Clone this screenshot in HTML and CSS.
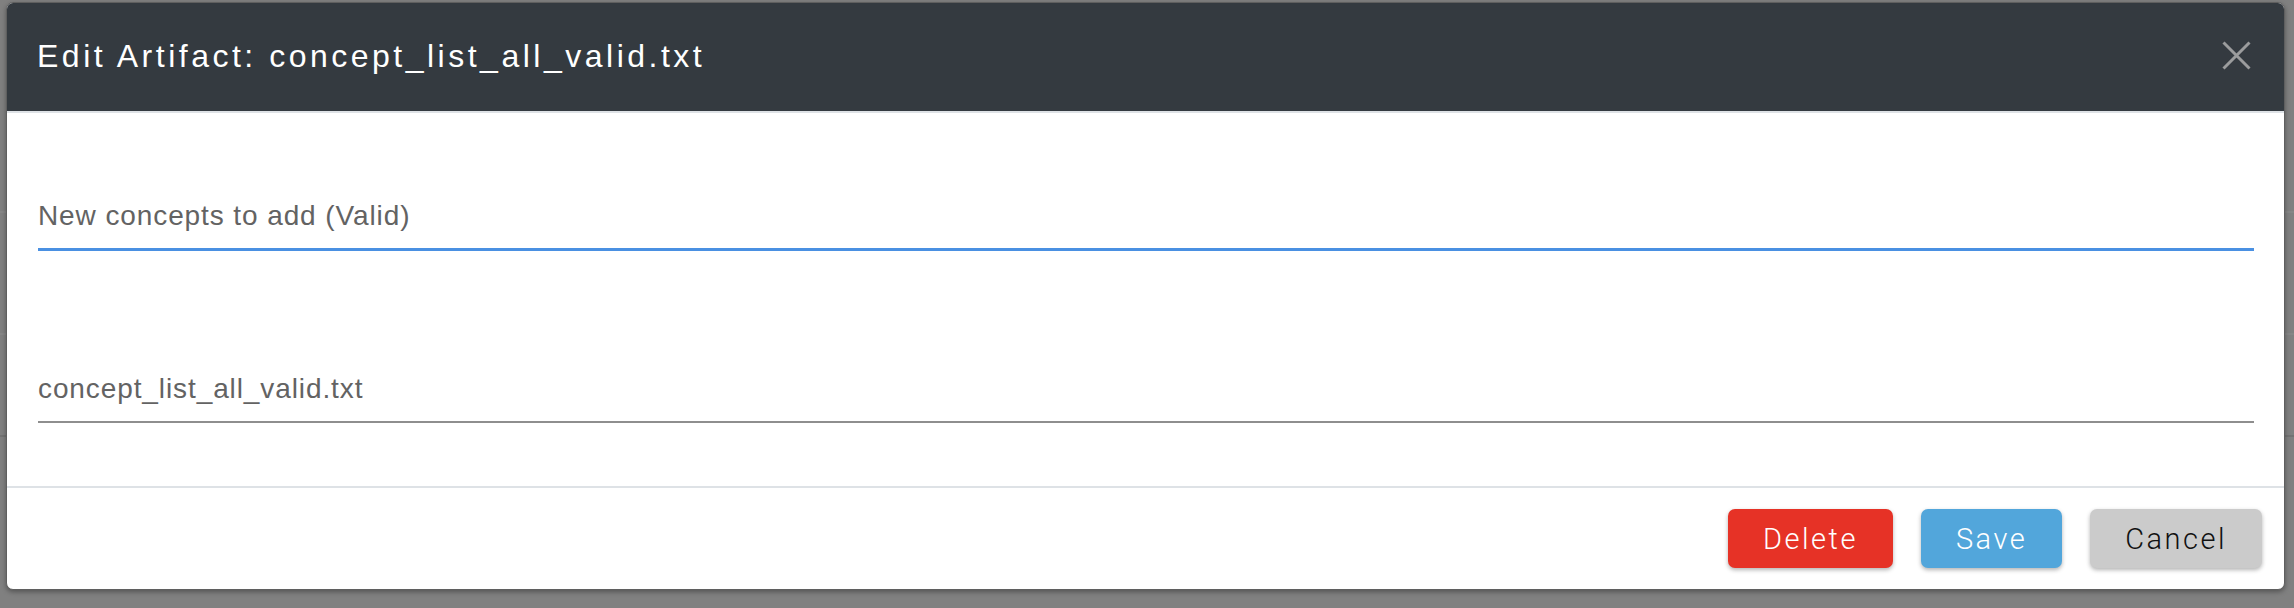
FILE: index.html
```html
<!DOCTYPE html>
<html lang="en">
<head>
<meta charset="utf-8">
<title>Edit Artifact</title>
<link rel="stylesheet" href="styles.css">
</head>
<body>
  <div class="backdrop">
    <div class="modal">
      <div class="modal-header">
        <h4 class="modal-title">Edit Artifact: concept_list_all_valid.txt</h4>
        <button class="close" aria-label="Close">
          <svg width="29" height="29" viewBox="0 0 29 29"><path d="M1.5 1.5 L27.5 27.5 M27.5 1.5 L1.5 27.5" stroke="#9b9c9d" stroke-width="3" stroke-linecap="butt" fill="none"/></svg>
        </button>
      </div>
      <div class="modal-body">
        <div class="field field-active">New concepts to add (Valid)</div>
        <div class="field">concept_list_all_valid.txt</div>
      </div>
      <div class="modal-footer">
        <button class="btn btn-delete">Delete</button>
        <button class="btn btn-save">Save</button>
        <button class="btn btn-cancel">Cancel</button>
      </div>
    </div>
  </div>
</body>
</html>
```

FILE: styles.css
```css
html, body {
  margin: 0;
  padding: 0;
}

body {
  width: 2294px;
  height: 608px;
  overflow: hidden;
  background-color: #808080;
  background-image:
    linear-gradient(to bottom,
      transparent 211px, #868686 211px, #868686 213px, transparent 213px,
      transparent 333px, #868686 333px, #868686 335px, transparent 335px,
      transparent 435px, #737373 435px, #737373 437px, transparent 437px);
  font-family: "Liberation Sans", Arial, Helvetica, sans-serif;
}

.backdrop {
  padding: 2px 0 0 6px;
}

.modal {
  width: 2277px;
  height: 586px;
  border: 1px solid #5f5f5f;
  border-radius: 7px;
  background: #ffffff;
  overflow: hidden;
  display: flex;
  flex-direction: column;
  box-shadow: 0 2px 5px rgba(0, 0, 0, 0.35);
}

.modal-header {
  height: 105px;
  flex: none;
  background: #343a40;
  border-bottom: 2px solid #dee2e6;
  display: flex;
  align-items: center;
  justify-content: space-between;
  padding: 0 33px 3px 30px;
}

.modal-title {
  margin: 0;
  color: #ffffff;
  font-size: 32px;
  font-weight: 400;
  letter-spacing: 3.5px;
  line-height: 40px;
}

.close {
  background: none;
  border: 0;
  padding: 0;
  margin: 0;
  width: 29px;
  height: 29px;
  display: flex;
  cursor: pointer;
}

.modal-body {
  height: 373px;
  flex: none;
  box-sizing: border-box;
  padding: 86px 30px 63px 31px;
  display: flex;
  flex-direction: column;
  gap: 121px;
}

.field {
  font-size: 28px;
  line-height: 34px;
  letter-spacing: 0.9px;
  color: #636363;
  padding-bottom: 15px;
  border-bottom: 2px solid #8e8e8e;
}

.field-active {
  border-bottom: 3px solid #4a90e2;
}

.modal-footer {
  flex: 1;
  border-top: 2px solid #dee2e6;
  display: flex;
  justify-content: flex-end;
  align-items: flex-start;
  gap: 28px;
  padding: 21px 22px 0 0;
}

.btn {
  height: 59px;
  padding: 0 35px;
  border: 0;
  border-radius: 7px;
  font-family: Roboto, "Liberation Sans", sans-serif;
  font-weight: 300;
  font-size: 29px;
  letter-spacing: 2.5px;
  box-shadow: 0 2px 4px rgba(0, 0, 0, 0.3);
  cursor: pointer;
}

.btn-delete {
  background: #e63226;
  color: #ffffff;
}

.btn-save {
  background: #52a6db;
  color: #ffffff;
}

.btn-cancel {
  background: #cbcbcb;
  color: #111111;
}
```
